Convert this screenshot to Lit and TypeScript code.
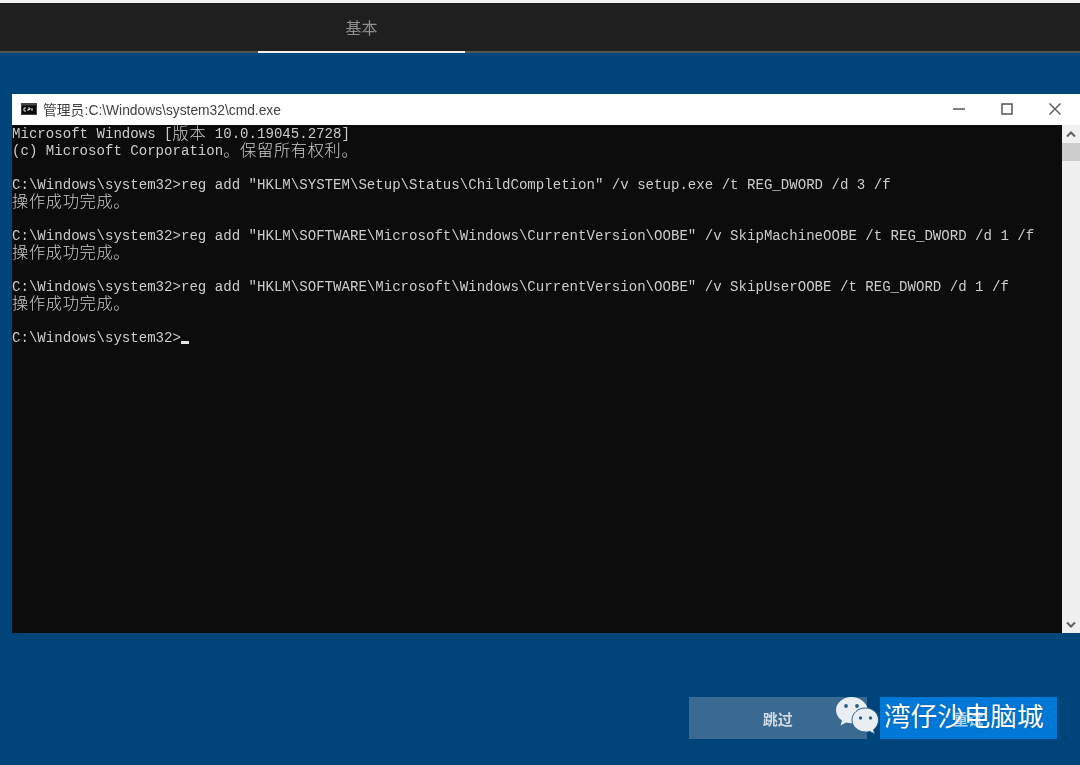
import { LitElement, html, css } from "lit";
import { customElement } from "lit/decorators.js";

const LINES: string[] = [
  "Microsoft Windows [|版本| 10.0.19045.2728]",
  "(c) Microsoft Corporation|。保留所有权利。",
  "",
  'C:\\Windows\\system32>reg add "HKLM\\SYSTEM\\Setup\\Status\\ChildCompletion" /v setup.exe /t REG_DWORD /d 3 /f',
  "|操作成功完成。",
  "",
  'C:\\Windows\\system32>reg add "HKLM\\SOFTWARE\\Microsoft\\Windows\\CurrentVersion\\OOBE" /v SkipMachineOOBE /t REG_DWORD /d 1 /f',
  "|操作成功完成。",
  "",
  'C:\\Windows\\system32>reg add "HKLM\\SOFTWARE\\Microsoft\\Windows\\CurrentVersion\\OOBE" /v SkipUserOOBE /t REG_DWORD /d 1 /f',
  "|操作成功完成。",
  "",
];

@customElement("app-root")
export class AppRoot extends LitElement {
  static styles = css`
    :host {
      display: flex;
      flex-direction: column;
      width: 1080px;
      height: 765px;
      overflow: hidden;
      position: relative;
      background: #00457a;
      font-family: "Liberation Sans", "Noto Sans CJK SC", sans-serif;
    }
    .strip { height: 3px; background: #f2f2f2; flex: none; }
    .topbar {
      height: 48px;
      background: #1f1f1f;
      border-bottom: 2px solid #555;
      flex: none;
      padding-left: 258px;
      display: flex;
    }
    .tab {
      width: 207px;
      height: 50px;
      box-sizing: border-box;
      border-bottom: 2px solid #f0f0f0;
      display: flex;
      align-items: center;
      justify-content: center;
      color: #8f8f8f;
      font-size: 16px;
      font-family: "Noto Sans CJK SC", sans-serif;
    }
    .tab span { filter: blur(0.35px); }
    .content { flex: none; padding: 41px 0 0 12px; }
    .window { width: 1068px; height: 539px; display: flex; flex-direction: column; }
    .title {
      height: 31px;
      box-sizing: border-box;
      padding: 0 0 2px 9px;
      flex: none;
      background: #fff;
      display: flex;
      align-items: center;
      color: #3f3f3f;
      font-size: 13.8px;
    }
    .title span { filter: blur(0.3px); word-spacing: -3.6px; }
    .appicon { width: 16px; height: 12px; margin-right: 6px; flex: none; }
    .caption { margin-left: auto; margin-right: 1px; display: flex; height: 100%; }
    .cbtn { width: 48px; display: flex; align-items: center; justify-content: center; }
    .cbtn svg { width: 14px; height: 14px; }
    .body { flex: 1; display: flex; min-height: 0; }
    .console {
      flex: 1;
      background: #0c0c0c;
      padding-top: 1px;
      color: #cccccc;
      font-family: "Liberation Mono", "Noto Sans CJK SC", monospace;
      font-size: 14.09px;
      filter: blur(0.35px);
    }
    .line { height: 17px; line-height: 17px; white-space: pre; }
    .cjk {
      font-family: "Noto Sans CJK SC", sans-serif;
      font-size: 16.2px;
      letter-spacing: 0.7px;
      font-weight: 300;
      line-height: 0;
      vertical-align: -1px;
    }
    .cursor {
      display: inline-block;
      width: 8.45px;
      height: 3px;
      background: #e6e6e6;
      vertical-align: -2px;
    }
    .scroll {
      width: 18px;
      flex: none;
      background: #f0f0f0;
      display: flex;
      flex-direction: column;
    }
    .arrow { height: 18px; display: flex; align-items: center; justify-content: center; flex: none; }
    .arrow svg { width: 10px; height: 7px; }
    .thumb { height: 18px; background: #cdcdcd; flex: none; }
    .spacer { flex: 1; }
    .footer {
      flex: none;
      padding: 64px 23px 0 689px;
      display: flex;
      gap: 13px;
    }
    .btn {
      width: 178px;
      height: 42px;
      display: flex;
      align-items: center;
      justify-content: center;
      font-size: 15px;
      font-family: "Noto Sans CJK SC", sans-serif;
      font-weight: 700;
      color: #cfd9e3;
    }
    .btn span { filter: blur(0.4px); }
    .skip { background: #3a6a91; }
    .next { background: #0078d7; color: #a8d4f2; }
    .mark {
      position: absolute;
      left: 835px;
      top: 696px;
      display: flex;
      align-items: center;
      height: 38px;
      gap: 5px;
    }
    .mark svg { width: 44px; height: 38px; flex: none; }
    .mark span {
      color: #fff;
      font-size: 26.6px;
      line-height: 38px;
      font-family: "Noto Sans CJK SC", sans-serif;
      font-weight: 400;
      text-shadow: 0 0 2px rgba(0, 0, 0, 0.35);
      white-space: nowrap;
    }
  `;

  private line(t: string) {
    const parts = t.split("|");
    return html`<div class="line">${parts.map((p, i) =>
      i % 2 ? html`<span class="cjk">${p}</span>` : p
    )}</div>`;
  }

  render() {
    return html`
      <div class="strip"></div>
      <div class="topbar"><div class="tab"><span>基本</span></div></div>
      <div class="content">
        <div class="window">
          <div class="title">
            <svg class="appicon" viewBox="0 0 16 12">
              <rect width="16" height="12" fill="#444"/>
              <rect x="1" y="2.5" width="14" height="8.5" fill="#0c0c0c"/>
              <path d="M5 5H3v3h2M7 5h2v1.500H7V8M11 5v3" stroke="#e8e8e8" stroke-width="1" fill="none"/>
            </svg>
            <span>管理员: C:\\Windows\\system32\\cmd.exe</span>
            <div class="caption">
              <div class="cbtn"><svg viewBox="0 0 14 14"><path d="M1 7h12" stroke="#555" stroke-width="1.500"/></svg></div>
              <div class="cbtn"><svg viewBox="0 0 14 14"><rect x="2" y="2" width="10" height="10" fill="none" stroke="#555" stroke-width="1.500"/></svg></div>
              <div class="cbtn"><svg viewBox="0 0 14 14"><path d="M1.500 1.500l11 11M12.500 1.500l-11 11" stroke="#555" stroke-width="1.400"/></svg></div>
            </div>
          </div>
          <div class="body">
            <div class="console">
              ${LINES.map((t) => this.line(t))}
              <div class="line">C:\\Windows\\system32&gt;<span class="cursor"></span></div>
            </div>
            <div class="scroll">
              <div class="arrow"><svg viewBox="0 0 10 7"><path d="M1 5.500l4-4 4 4" fill="none" stroke="#606060" stroke-width="2"/></svg></div>
              <div class="thumb"></div>
              <div class="spacer"></div>
              <div class="arrow"><svg viewBox="0 0 10 7"><path d="M1 1.500l4 4 4-4" fill="none" stroke="#606060" stroke-width="2"/></svg></div>
            </div>
          </div>
        </div>
      </div>
      <div class="footer">
        <div class="btn skip"><span>跳过</span></div>
        <div class="btn next"><span>重试</span></div>
      </div>
      <div class="mark">
        <svg viewBox="0 0 44 38">
          <path d="M16.500 1C8 1 1 7 1 14c0 4.200 2.300 8 6 10.500l-1.500 5 5.800-3c1.800.5 3.700.8 5.700.8 1 0 2-.1 3-.2 0 0 13-13.500 13-14C31 6 24.500 1 16.500 1z" fill="#e9eef3"/>
          <circle cx="11" cy="10" r="1.900" fill="#2a5f8a"/>
          <circle cx="22" cy="10" r="1.900" fill="#2a5f8a"/>
          <path d="M30.500 12c-7.500 0-13.500 5.300-13.500 12s6 12 13.500 12c1.500 0 3-.2 4.300-.6l5 2.600-1.300-4.200c3-2.200 5-6 5-9.800 0-6.700-5.500-12-13-12z" fill="#e9eef3" stroke="#2a5f8a" stroke-width="1"/>
          <circle cx="25.500" cy="22" r="1.700" fill="#2a5f8a"/>
          <circle cx="35.500" cy="22" r="1.700" fill="#2a5f8a"/>
        </svg>
        <span>湾仔沙电脑城</span>
      </div>
    `;
  }
}
